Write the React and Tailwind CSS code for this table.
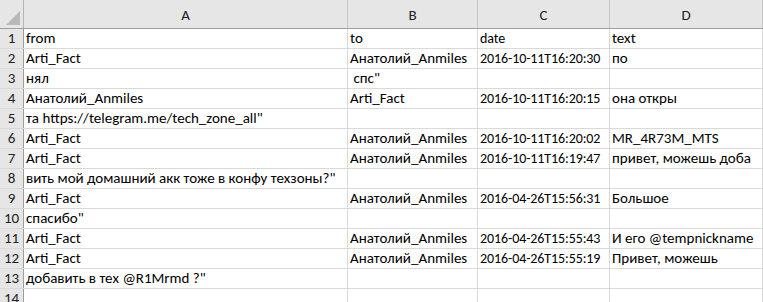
const cols = [
  { key: "A", w: "w-[324px]", t: "" },
  { key: "B", w: "w-[130px]", t: "" },
  { key: "C", w: "w-[132px]", t: "text-[14px] tracking-[-0.1px]" },
  { key: "D", w: "w-[153px]", t: "" },
];

const rows = [
  ["from", "to", "date", "text"],
  ["Arti_Fact", "Анатолий_Anmiles", "2016-10-11T16:20:30", "по"],
  ["нял", " спс\"", "", ""],
  ["Анатолий_Anmiles", "Arti_Fact", "2016-10-11T16:20:15", "она откры"],
  ["та https://telegram.me/tech_zone_all\"", "", "", ""],
  ["Arti_Fact", "Анатолий_Anmiles", "2016-10-11T16:20:02", "MR_4R73M_MTS"],
  ["Arti_Fact", "Анатолий_Anmiles", "2016-10-11T16:19:47", "привет, можешь доба"],
  ["вить мой домашний акк тоже в конфу техзоны?\"", "", "", ""],
  ["Arti_Fact", "Анатолий_Anmiles", "2016-04-26T15:56:31", "Большое"],
  ["спасибо\"", "", "", ""],
  ["Arti_Fact", "Анатолий_Anmiles", "2016-04-26T15:55:43", "И его @tempnickname"],
  ["Arti_Fact", "Анатолий_Anmiles", "2016-04-26T15:55:19", "Привет, можешь"],
  ["добавить в тех @R1Mrmd ?\"", "", "", ""],
  ["", "", "", ""],
];

export default function App() {
  return (
    <div className="w-[763px] h-[302px] overflow-hidden bg-white font-['Carlito','Lato',sans-serif] text-[15px] text-black">
      {/* header */}
      <div className="flex h-[29px] bg-[#e6e6e6] border-b border-[#9e9e9e]">
        <div className="relative w-[24px] shrink-0 border-r border-[#b5b5b5]">
          <div className="absolute right-[3px] bottom-[3px] w-0 h-0 border-l-[14px] border-l-transparent border-b-[14px] border-b-[#b9b9b9]" />
        </div>
        {cols.map((c) => (
          <div key={c.key} className={`${c.w} shrink-0 border-r border-[#c6c6c6] flex items-center justify-center text-[#222] pt-[2px]`}>
            {c.key}
          </div>
        ))}
        <div className="flex-1" />
      </div>

      {rows.map((r, i) => (
        <div key={i} className="flex h-[20px] border-b border-[#d9d9d9]">
          <div className="w-[24px] shrink-0 bg-[#e6e6e6] border-r border-[#9e9e9e] flex items-center justify-center text-[#222] leading-none">
            {i + 1}
          </div>
          {cols.map((c, j) => (
            <div key={c.key} className={`${c.w} ${c.t} shrink-0 border-r border-[#d9d9d9] flex items-center pl-[2px] whitespace-pre overflow-hidden leading-none`}>
              {r[j]}
            </div>
          ))}
          <div className="flex-1" />
        </div>
      ))}
    </div>
  );
}
